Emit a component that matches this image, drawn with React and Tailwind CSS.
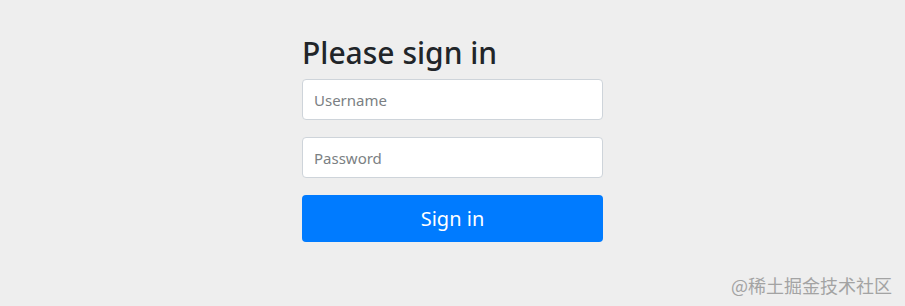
export default function App() {
  return (
    <div className="relative h-[306px] w-full overflow-hidden bg-[#eeeeee] font-['Noto_Sans',sans-serif] text-[#212529]">
      <form className="mx-auto w-[301px] pt-[35px]" onSubmit={(e) => e.preventDefault()}>
        <h2 className="mb-[8px] text-[30px] leading-[36px] font-medium">Please sign in</h2>
        <input
          type="text"
          placeholder="Username"
          className="block h-[41px] w-full rounded-[4px] border border-[#ced4da] bg-white px-[11px] text-[15px] placeholder:text-[#7b7f83] outline-none"
        />
        <input
          type="password"
          placeholder="Password"
          className="mt-[17px] block h-[41px] w-full rounded-[4px] border border-[#ced4da] bg-white px-[11px] text-[15px] placeholder:text-[#7b7f83] outline-none"
        />
        <button
          type="submit"
          className="mt-[17px] block h-[47px] w-full rounded-[4px] bg-[#007bff] text-[20px] text-white"
        >
          Sign in
        </button>
      </form>
      <div className="absolute right-[13px] bottom-[10px] font-['Noto_Sans_CJK_SC',sans-serif] text-[18px] leading-[22px] text-[#a3a3a3]">
        @稀土掘金技术社区
      </div>
    </div>
  );
}
